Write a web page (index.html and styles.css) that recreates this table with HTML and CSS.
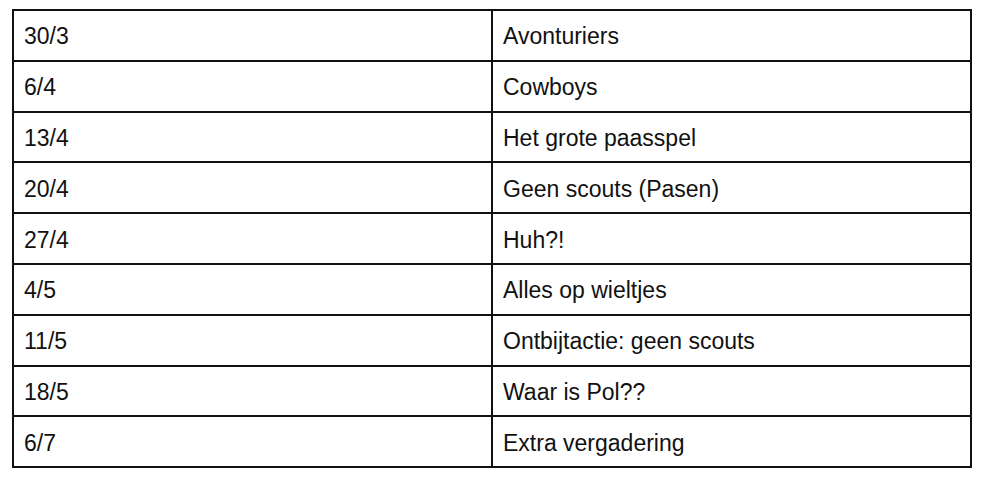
FILE: index.html
```html
<!DOCTYPE html>
<html>
<head>
<meta charset="utf-8">
<link rel="stylesheet" href="styles.css">
</head>
<body>
<table class="schedule">
  <tr><td class="date">30/3</td><td class="theme">Avonturiers</td></tr>
  <tr><td class="date">6/4</td><td class="theme">Cowboys</td></tr>
  <tr><td class="date">13/4</td><td class="theme">Het grote paasspel</td></tr>
  <tr><td class="date">20/4</td><td class="theme">Geen scouts (Pasen)</td></tr>
  <tr><td class="date">27/4</td><td class="theme">Huh?!</td></tr>
  <tr><td class="date">4/5</td><td class="theme">Alles op wieltjes</td></tr>
  <tr><td class="date">11/5</td><td class="theme">Ontbijtactie: geen scouts</td></tr>
  <tr><td class="date">18/5</td><td class="theme">Waar is Pol??</td></tr>
  <tr><td class="date">6/7</td><td class="theme">Extra vergadering</td></tr>
</table>
</body>
</html>
```
FILE: styles.css
```css
html, body {
  margin: 0;
  padding: 0;
  background: #ffffff;
}
body {
  padding: 9px 0 0 12px;
  font-family: "Liberation Sans", Arial, sans-serif;
  color: #111111;
}
.schedule {
  border-collapse: collapse;
  width: 960px;
  table-layout: fixed;
}
.schedule td {
  border: 2px solid #111111;
  height: 46.8px;
  padding: 2px 10px 0 10px;
  font-size: 23px;
  line-height: 26px;
  vertical-align: middle;
}
.schedule td.date {
  width: 457px;
}
```
